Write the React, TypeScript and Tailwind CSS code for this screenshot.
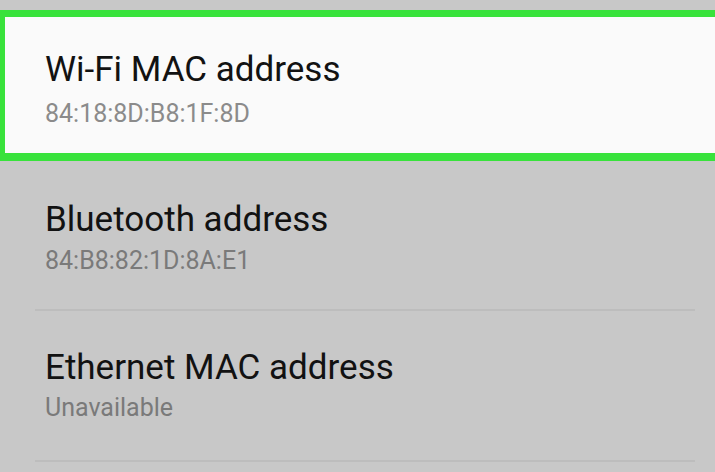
export default function App() {
  return (
    <div className="w-[715px] h-[472px] overflow-hidden bg-[#c8c8c8] font-['Roboto',sans-serif]">
      <div className="h-[10px]" />

      {/* highlighted row */}
      <div className="w-[740px] h-[151px] border-t-[7px] border-b-[8px] border-l-[5px] border-r-0 border-[#38e23b] bg-[#fafafa] pl-[40px] pt-[34px]">
        <div className="text-[35px] leading-[38px] text-[#121212]">Wi-Fi MAC address</div>
        <div className="mt-[11px] text-[25px] leading-[28px] text-[#8b8b8b]">84:18:8D:B8:1F:8D</div>
      </div>

      <div className="h-[148px] pl-[45px] pt-[40px]">
        <div className="text-[35px] leading-[38px] text-[#121212]">Bluetooth address</div>
        <div className="mt-[8px] text-[25px] leading-[28px] text-[#7a7a7a]">84:B8:82:1D:8A:E1</div>
      </div>
      <div className="ml-[35px] mr-[20px] h-[2px] bg-[#bdbdbd]" />

      <div className="h-[149px] pl-[45px] pt-[38px]">
        <div className="text-[35px] leading-[38px] text-[#121212]">Ethernet MAC address</div>
        <div className="mt-[7px] text-[25px] leading-[28px] text-[#7a7a7a]">Unavailable</div>
      </div>
      <div className="ml-[35px] mr-[20px] h-[2px] bg-[#bdbdbd]" />
    </div>
  );
}
